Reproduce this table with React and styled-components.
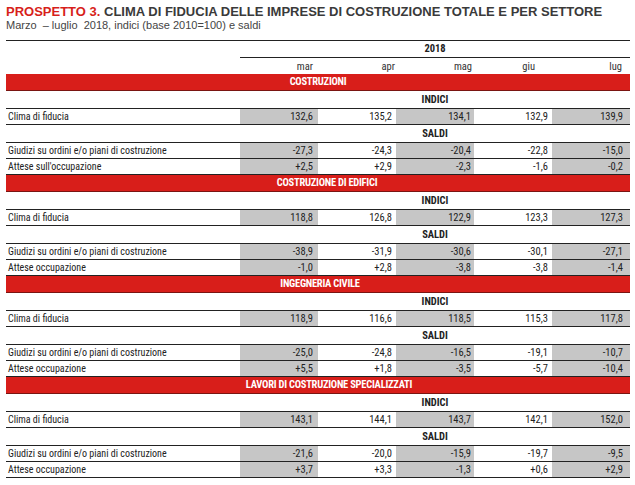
import React from "react";
import styled, { createGlobalStyle } from "styled-components";

const Global = createGlobalStyle`
  html, body { margin: 0; padding: 0; background: #fff; }
  body {
    font-family: "Roboto Condensed", "Liberation Sans", Arial, sans-serif;
    color: #222;
  }
`;

const Page = styled.div`
  width: 624px;
  padding: 4px 5px 0 6px;
`;

const Title = styled.div`
  font-family: "Liberation Sans", Arial, sans-serif;
  font-size: 13px;
  line-height: 15px;
  font-weight: 700;
  color: #3a3a3a;
  white-space: nowrap;
`;

const Red = styled.span`
  color: #d71f1b;
`;

const Subtitle = styled.div`
  font-family: "Liberation Sans", Arial, sans-serif;
  font-size: 11px;
  line-height: 12px;
  color: #444;
  white-space: pre;
`;

const Table = styled.div`
  margin-top: 9px;
  border-top: 1px solid #222;
  display: grid;
  grid-template-columns: 234px repeat(5, 78px);
`;

const YearCell = styled.div`
  grid-column: 2 / span 5;
  height: 16px;
  line-height: 16px;
  border-bottom: 1px solid #222;
  text-align: center;
  font-size: 10.5px;
  font-weight: 700;
  color: #222;
`;

const Spacer = styled.div`
  height: 16px;
`;

const Month = styled.div`
  height: 16px;
  line-height: 17px;
  font-size: 10.5px;
  color: #333;
  text-align: right;
  padding-right: ${(p) => p.$pad}px;
`;

const RedBar = styled.div`
  grid-column: 1 / -1;
  height: 16px;
  line-height: 16px;
  background: #d81e1a;
  border-bottom: 1px solid #7a1512;
  color: #fff;
  font-size: 10.5px;
  font-weight: 700;
  letter-spacing: -0.25px;
  text-align: center;
  padding-left: ${(p) => p.$shift || 0}px;
`;

const GroupLabel = styled.div`
  grid-column: 2 / span 5;
  height: 17px;
  line-height: 18px;
  text-align: center;
  font-size: 10.5px;
  font-weight: 700;
  color: #222;
`;

const GroupBlock = styled.div`
  grid-column: 1 / -1;
  display: grid;
  grid-template-columns: subgrid;
  border-top: 1px solid #222;
`;

const RowLabel = styled.div`
  height: 15px;
  line-height: 15px;
  border-bottom: 1px solid #222;
  font-size: 10px;
  color: #222;
  padding-left: 2px;
  white-space: nowrap;
`;

const Value = styled.div`
  height: 15px;
  line-height: 15px;
  border-bottom: 1px solid #222;
  background: ${(p) => (p.$shaded ? "#c6c6c6" : "#fff")};
  font-size: 10.5px;
  color: #222;
  text-align: right;
  padding-right: ${(p) => p.$pad}px;
`;

const months = ["mar", "apr", "mag", "giu", "lug"];
const monthPad = [5, 1, 2, 17, 8];
const valuePad = [5, 4, 3, 4, 7];

const sections = [
  {
    name: "COSTRUZIONI",
    clima: ["132,6", "135,2", "134,1", "132,9", "139,9"],
    giudizi: ["-27,3", "-24,3", "-20,4", "-22,8", "-15,0"],
    atteseLabel: "Attese sull'occupazione",
    attese: ["+2,5", "+2,9", "-2,3", "-1,6", "-0,2"],
  },
  {
    name: "COSTRUZIONE DI EDIFICI",
    shift: 18,
    clima: ["118,8", "126,8", "122,9", "123,3", "127,3"],
    giudizi: ["-38,9", "-31,9", "-30,6", "-30,1", "-27,1"],
    atteseLabel: "Attese occupazione",
    attese: ["-1,0", "+2,8", "-3,8", "-3,8", "-1,4"],
  },
  {
    name: "INGEGNERIA CIVILE",
    shift: 4,
    clima: ["118,9", "116,6", "118,5", "115,3", "117,8"],
    giudizi: ["-25,0", "-24,8", "-16,5", "-19,1", "-10,7"],
    atteseLabel: "Attese occupazione",
    attese: ["+5,5", "+1,8", "-3,5", "-5,7", "-10,4"],
  },
  {
    name: "LAVORI DI COSTRUZIONE SPECIALIZZATI",
    shift: 22,
    clima: ["143,1", "144,1", "143,7", "142,1", "152,0"],
    giudizi: ["-21,6", "-20,0", "-15,9", "-19,7", "-9,5"],
    atteseLabel: "Attese occupazione",
    attese: ["+3,7", "+3,3", "-1,3", "+0,6", "+2,9"],
  },
];

function DataRow({ label, values }) {
  return (
    <>
      <RowLabel>{label}</RowLabel>
      {values.map((v, i) => (
        <Value key={i} $shaded={i % 2 === 0} $pad={valuePad[i]}>
          {v}
        </Value>
      ))}
    </>
  );
}

function Section({ s }) {
  return (
    <>
      <RedBar $shift={s.shift}>{s.name}</RedBar>
      <Spacer />
      <GroupLabel>INDICI</GroupLabel>
      <GroupBlock>
        <DataRow label="Clima di fiducia" values={s.clima} />
      </GroupBlock>
      <Spacer />
      <GroupLabel>SALDI</GroupLabel>
      <GroupBlock>
        <DataRow label="Giudizi su ordini e/o piani di costruzione" values={s.giudizi} />
        <DataRow label={s.atteseLabel} values={s.attese} />
      </GroupBlock>
    </>
  );
}

export default function App() {
  return (
    <Page>
      <Global />
      <Title>
        <Red>PROSPETTO 3.</Red> CLIMA DI FIDUCIA DELLE IMPRESE DI COSTRUZIONE TOTALE E PER SETTORE
      </Title>
      <Subtitle>Marzo  – luglio  2018, indici (base 2010=100) e saldi</Subtitle>
      <Table>
        <Spacer />
        <YearCell>2018</YearCell>
        <Spacer />
        {months.map((m, i) => (
          <Month key={m} $pad={monthPad[i]}>
            {m}
          </Month>
        ))}
        {sections.map((s) => (
          <Section key={s.name} s={s} />
        ))}
      </Table>
    </Page>
  );
}
